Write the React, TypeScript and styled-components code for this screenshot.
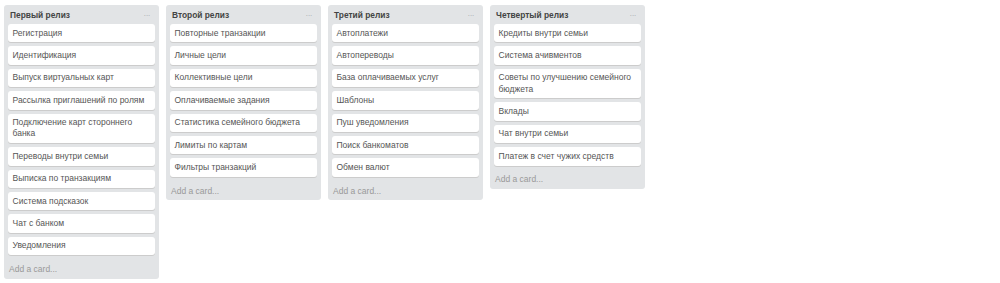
import styled, { createGlobalStyle } from 'styled-components';

const GlobalStyle = createGlobalStyle`
	body {
		margin: 0;
		background: #fff;
		font-family: "Liberation Sans", Arial, sans-serif;
	}
`

const lists = [
	{
		title: 'Первый релиз',
		cards: [
			'Регистрация',
			'Идентификация',
			'Выпуск виртуальных карт',
			'Рассылка приглашений по ролям',
			'Подключение карт стороннего банка',
			'Переводы внутри семьи',
			'Выписка по транзакциям',
			'Система подсказок',
			'Чат с банком',
			'Уведомления',
		],
	},
	{
		title: 'Второй релиз',
		cards: [
			'Повторные транзакции',
			'Личные цели',
			'Коллективные цели',
			'Оплачиваемые задания',
			'Статистика семейного бюджета',
			'Лимиты по картам',
			'Фильтры транзакций',
		],
	},
	{
		title: 'Третий релиз',
		cards: [
			'Автоплатежи',
			'Автопереводы',
			'База оплачиваемых услуг',
			'Шаблоны',
			'Пуш уведомления',
			'Поиск банкоматов',
			'Обмен валют',
		],
	},
	{
		title: 'Четвертый релиз',
		cards: [
			'Кредиты внутри семьи',
			'Система ачивментов',
			'Советы по улучшению семейного бюджета',
			'Вклады',
			'Чат внутри семьи',
			'Платеж в счет чужих средств',
		],
	},
]

const App = () => {
	return (
		<>
			<GlobalStyle />
			<Board>
				{lists.map((list) => (
					<List key={list.title}>
						<ListHeader>
							<ListTitle>{list.title}</ListTitle>
							<ListMenu>···</ListMenu>
						</ListHeader>
						<Cards>
							{list.cards.map((card) => (
								<Card key={card}>{card}</Card>
							))}
						</Cards>
						<AddCard>Add a card...</AddCard>
					</List>
				))}
			</Board>
		</>
	)
}

const Board = styled.div`
	display: flex;
	align-items: flex-start;
	gap: 7px;
	padding: 5px 4px;
`

const List = styled.div`
	width: 155px;
	box-sizing: border-box;
	background-color: #e2e4e6;
	border-radius: 3px;
	padding: 0 4px;
	display: flex;
	flex-direction: column;
`

const ListHeader = styled.div`
	height: 19px;
	display: flex;
	align-items: center;
	justify-content: space-between;
	padding: 1px 5px 0 2px;
	box-sizing: border-box;
`

const ListTitle = styled.div`
	font-size: 8.4px;
	font-weight: bold;
	color: #444;
`

const ListMenu = styled.div`
	font-size: 8px;
	color: #a5a8ab;
	letter-spacing: -0.5px;
`

const Cards = styled.div`
	display: flex;
	flex-direction: column;
	gap: 4px;
`

const Card = styled.div`
	background-color: #fff;
	border-radius: 3px;
	box-shadow: 0 1px 0 #ccc;
	padding: 3.6px 4.5px;
	font-size: 8.5px;
	line-height: 11.2px;
	color: #555;
`

const AddCard = styled.div`
	margin-top: 4px;
	height: 19.6px;
	display: flex;
	align-items: center;
	padding: 0 1px;
	font-size: 8.5px;
	color: #999;
`

export default App
